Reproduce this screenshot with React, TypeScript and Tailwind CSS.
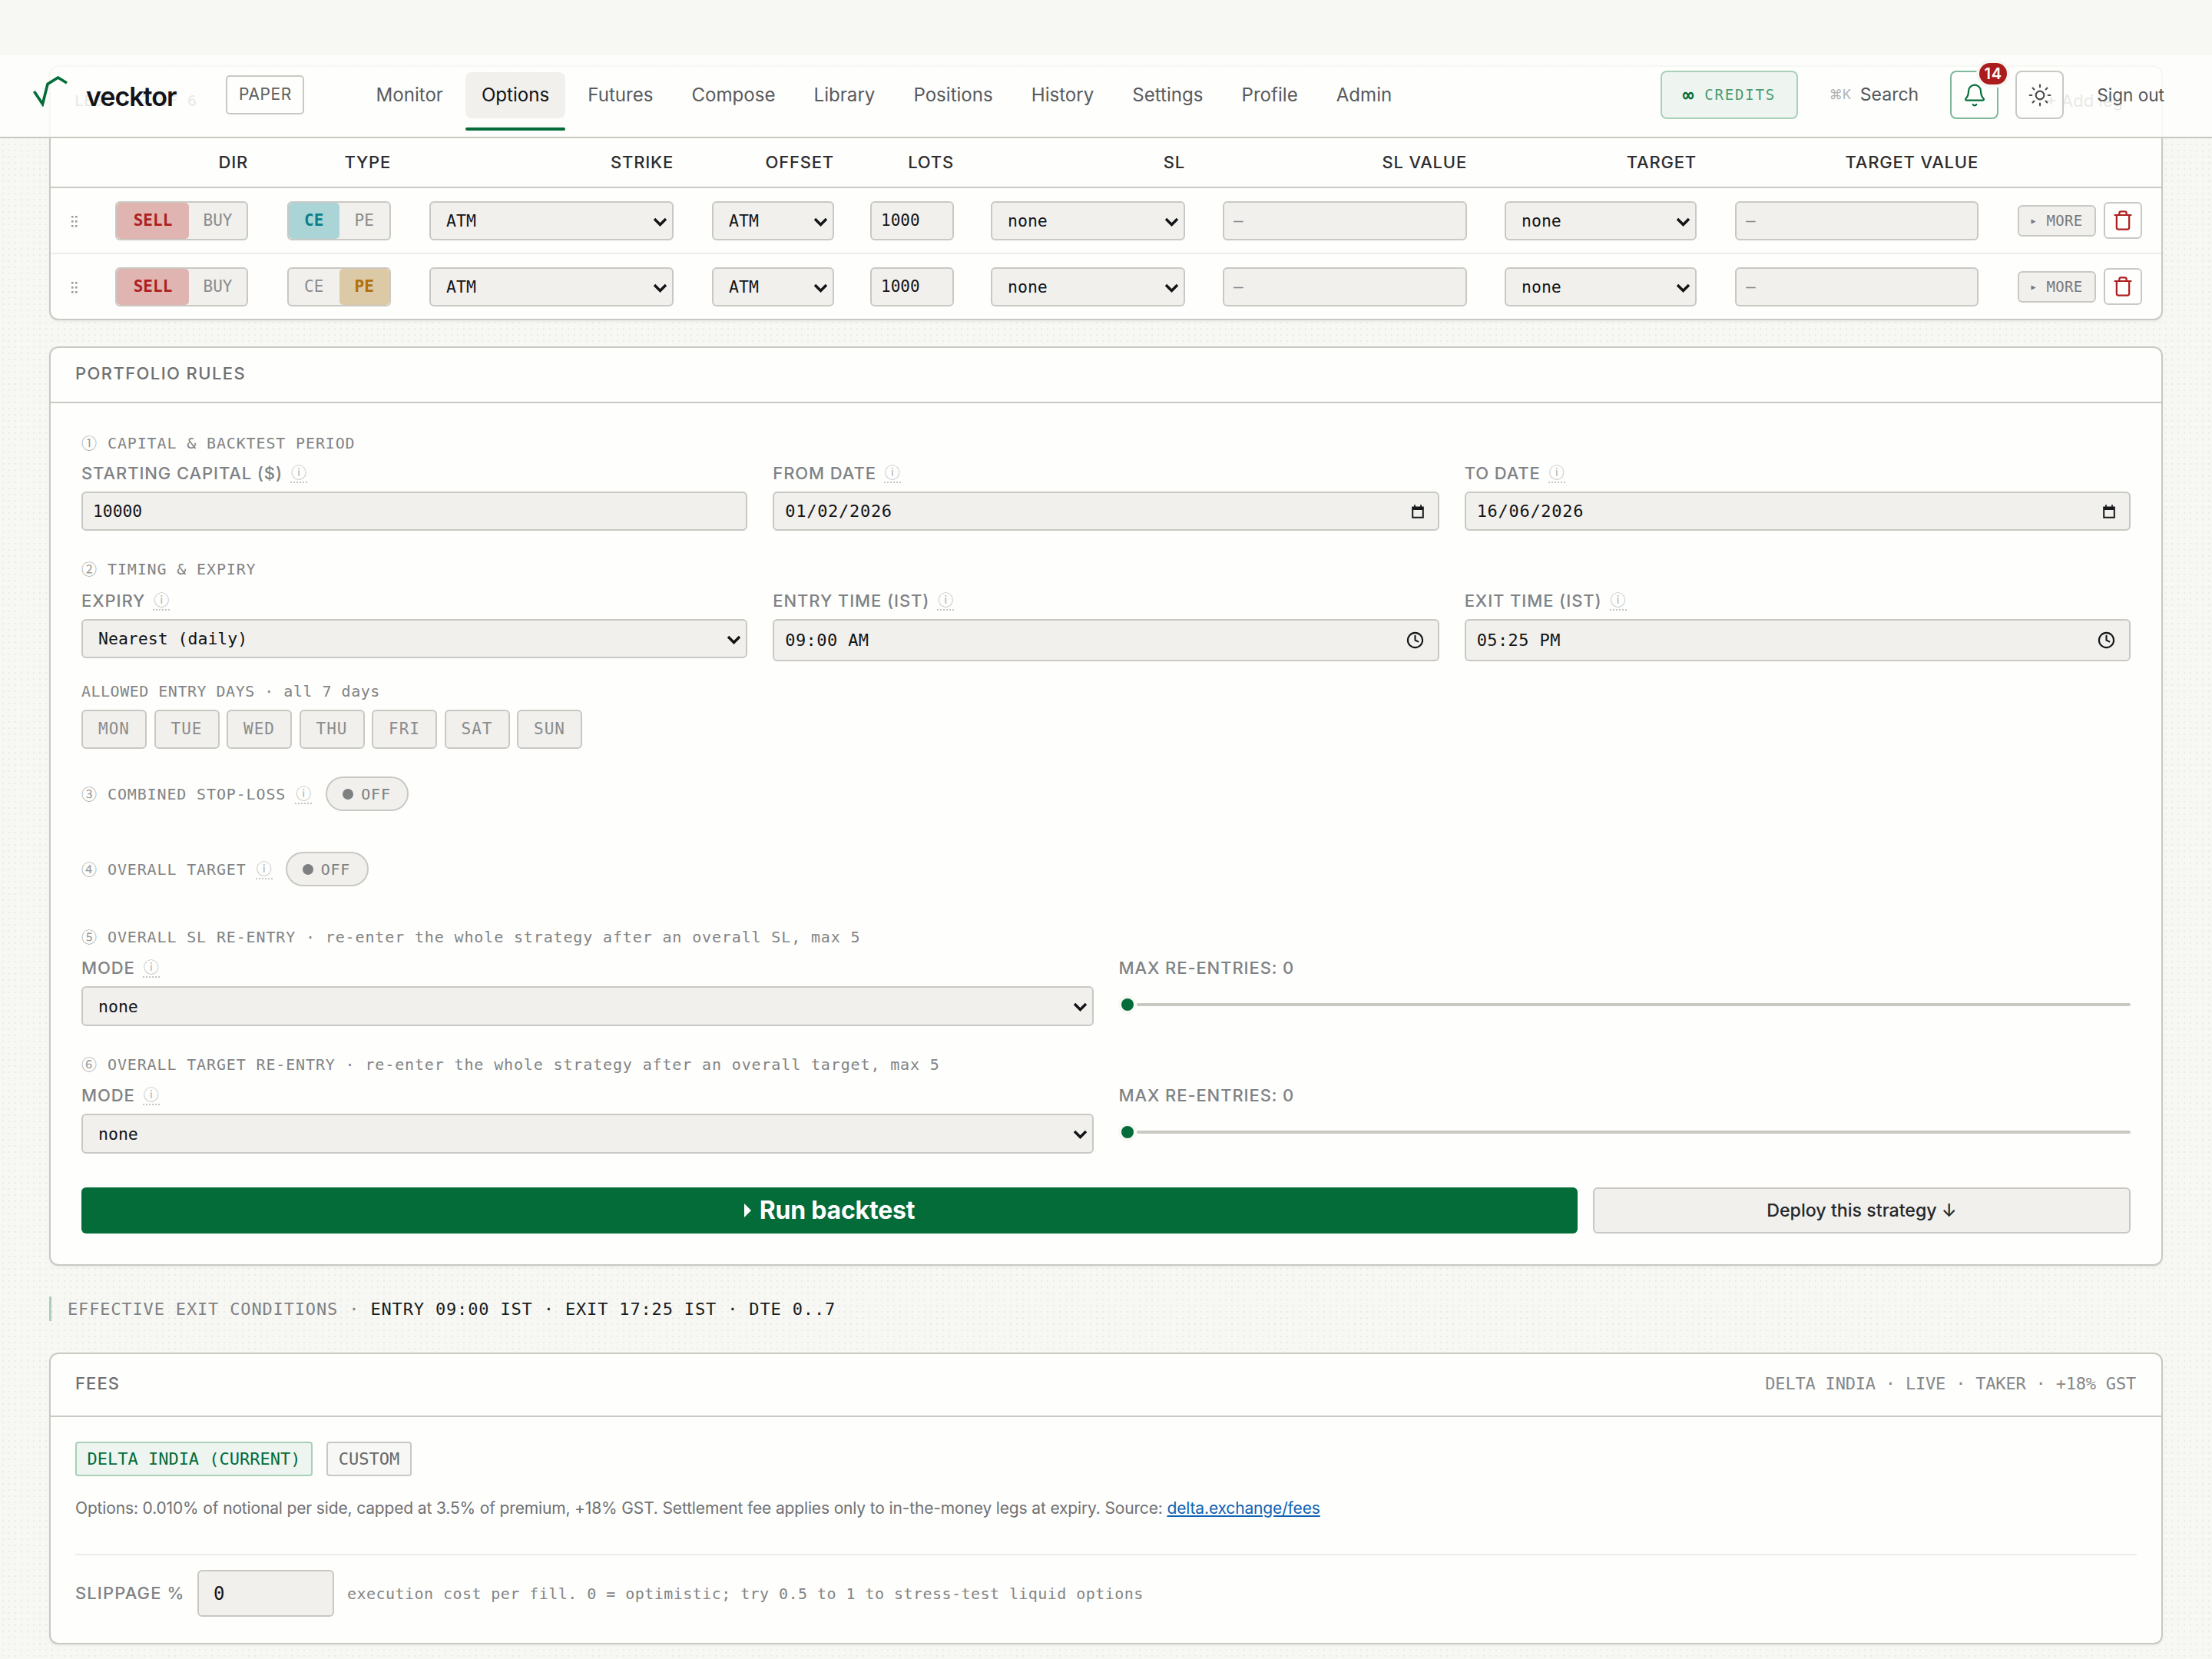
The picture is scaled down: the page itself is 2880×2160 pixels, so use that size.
import React from "react";
import { Bell, Sun, Trash, Clock } from "lucide-react";

const mono = "font-['DejaVu_Sans_Mono',monospace]";
const ctl = "border-2 border-[#c9c8c3] rounded-[6px] bg-[#f1f0ed]";

function Info({ cls = "" }: { cls?: string }) {
  return (
    <span className={"inline-block border-b-2 border-dotted border-[#c4c5c3] text-[#b4b5b3] font-normal leading-[24px] w-[22px] text-center font-['Noto_Sans_CJK_SC',sans-serif] text-[20px] tracking-normal " + cls}>ⓘ</span>
  );
}

function Sel({ value, w, cls = "" }: { value: string; w: string; cls?: string }) {
  return (
    <div className={`relative ${w} ${cls}`}>
      <select defaultValue={value} className={`${ctl} w-full h-full appearance-none ${mono} text-[#131416] text-[21.5px] pl-[20px] pr-[30px] pt-[2px] block`}>
        <option>{value}</option>
      </select>
      <svg width="19" height="12" viewBox="0 0 19 12" fill="none" className="absolute right-[8px] top-[21px] pointer-events-none">
        <path d="M2 2l7.5 7.5L17 2" stroke="#131416" strokeWidth="3.4" />
      </svg>
    </div>
  );
}

function Seg({ a, b, on, w, onCls, split }: { a: string; b: string; on: 0 | 1; w: string; onCls: string; split: string }) {
  const off = "text-[#8a8c8e]";
  return (
    <div className={`${ctl} ${w} h-[51px] grid ${split} overflow-hidden ${mono} text-[21px] text-center leading-[46px]`}>
      <div className={`rounded-[5px] ${on === 0 ? onCls + " font-bold" : off}`}>{a}</div>
      <div className={`rounded-[5px] ${on === 1 ? onCls + " font-bold" : off}`}>{b}</div>
    </div>
  );
}

const cols = "grid grid-cols-[84px_224px_185px_368px_206px_157px_302px_367px_300px_368px_1fr]";

function Handle() {
  return (
    <svg width="8" height="15" viewBox="0 0 8 15" className="ml-[27px] mt-[2px]" fill="#9a9b9a">
      <rect x="0" y="0" width="2.6" height="2.6" />
      <rect x="5" y="0" width="2.6" height="2.6" />
      <rect x="0" y="6" width="2.6" height="2.6" />
      <rect x="5" y="6" width="2.6" height="2.6" />
      <rect x="0" y="12" width="2.6" height="2.6" />
      <rect x="5" y="12" width="2.6" height="2.6" />
    </svg>
  );
}

function LegRow({ type, last }: { type: 0 | 1; last?: boolean }) {
  return (
    <div className={`${cols} items-center ${last ? "h-[84px]" : "h-[86px] border-b-2 border-[#edecea]"}`}>
      <Handle />
      <Seg a="SELL" b="BUY" on={0} w="w-[173px]" split="grid-cols-[94px_1fr]" onCls="bg-[#dfb4b1] text-[#ad1f1f]" />
      <Seg a="CE" b="PE" on={type} w="w-[135px]" split="grid-cols-2" onCls={type === 0 ? "bg-[#abd4d6] text-[#0a7f8c]" : "bg-[#dcc9a5] text-[#b0700a]"} />
      <Sel value="ATM" w="w-[318px] h-[51px]" />
      <Sel value="ATM" w="w-[159px] h-[51px]" />
      <input readOnly value="1000" className={`${ctl} w-[109px] h-[51px] px-[12px] text-[21px] text-[#131416] ${mono}`} />
      <Sel value="none" w="w-[253px] h-[51px]" />
      <input readOnly value="—" className={`${ctl} w-[318px] h-[51px] px-[12px] text-[21px] text-[#85878a] ${mono}`} />
      <Sel value="none" w="w-[250px] h-[51px]" />
      <input readOnly value="—" className={`${ctl} w-[317px] h-[51px] px-[12px] text-[21px] text-[#85878a] ${mono}`} />
      <div className="flex items-center gap-[10px]">
        <button className={`${ctl} w-[102px] h-[41px] flex items-center justify-center gap-[14px] text-[#77797b] text-[19px] ${mono}`}>
          <span className="text-[10px]">▶</span>
          <span className="tracking-[0.3px]">MORE</span>
        </button>
        <button className="border-2 border-[#c9c8c3] rounded-[6px] bg-[#fefefc] w-[50px] h-[48px] flex items-center justify-center">
          <Trash size={28} strokeWidth={1.9} color="#ad1f1f" />
        </button>
      </div>
    </div>
  );
}

function Sec({ n, children, cls = "" }: { n: string; children: React.ReactNode; cls?: string }) {
  return (
    <div className={`flex items-center h-[24px] text-[20px] leading-[24px] tracking-[0.86px] text-[#828486] whitespace-pre ${mono} ${cls}`}>
      <span className="w-[34px] font-['Noto_Sans_CJK_SC',sans-serif] text-[#9a9c9c] tracking-normal">{n}</span>
      {children}
    </div>
  );
}

function FieldLabel({ children, info = true }: { children: React.ReactNode; info?: boolean }) {
  return (
    <div className="flex items-center gap-[10px] h-[28px] text-[22px] font-medium tracking-[0.9px] text-[#7f8285] whitespace-pre">
      <span>{children}</span>
      {info && <Info />}
    </div>
  );
}

function Calendar() {
  return (
    <svg width="16" height="18" viewBox="0 0 16 18" fill="none">
      <path d="M1.2 3.5h13.6v13.3H1.2z" stroke="#16181a" strokeWidth="2" />
      <path d="M1 5.5h14" stroke="#16181a" strokeWidth="3" />
      <path d="M4 0.2v3M12 0.2v3" stroke="#16181a" strokeWidth="1.8" />
    </svg>
  );
}

function DateBox({ value, h, icon, track }: { value: string; h: string; icon: React.ReactNode; track: string }) {
  return (
    <div className={`${ctl} ${h} flex items-center justify-between pl-[14px] pr-[18px]`}>
      <input readOnly value={value} className={`bg-transparent w-[300px] text-[22px] ${track} text-[#131416] outline-none ${mono}`} />
      {icon}
    </div>
  );
}

function Toggle() {
  return (
    <div className={`h-[45px] w-[108px] rounded-full border-2 border-[#c9c8c3] bg-[#f1f0ed] flex items-center pl-[20px] gap-[10px] text-[20px] tracking-[0.8px] text-[#7d7f81] ${mono}`}>
      <span className="w-[14px] h-[14px] rounded-full bg-[#7d7f81]" />
      OFF
    </div>
  );
}

function Slider() {
  return (
    <div className="flex items-center h-[52px] -mt-[2px] pl-[3px]">
      <span className="w-[16px] h-[16px] rounded-full bg-[#046c38] ring-[4px] ring-[#f7f8f4]" />
      <span className="flex-1 h-[4px] bg-[#c9c8c3] ml-[4px] rounded-full" />
    </div>
  );
}

export default function App() {
  const tabs = ["Monitor", "Options", "Futures", "Compose", "Library", "Positions", "History", "Settings", "Profile", "Admin"];
  const days = ["MON", "TUE", "WED", "THU", "FRI", "SAT", "SUN"];
  return (
    <div className="relative w-[2880px] h-[2160px] overflow-hidden font-['Inter',sans-serif] bg-[#f7f8f4] bg-[radial-gradient(circle,#eaebe6_1.3px,transparent_1.5px)] bg-[length:8px_8px]">
      <div className="h-[72px] bg-[#f7f8f4]" />

      {/* nav */}
      <nav className="absolute top-[72px] left-0 right-0 z-10 h-[108px] bg-[#fefefc]/85 border-b-2 border-[#c9c8c3] flex items-center pl-[43px] pr-[62px]">
        <svg width="46" height="40" viewBox="0 0 46 40" fill="none" className="-mt-[12px]">
          <polyline points="1.5,20 12.5,36.5 19,10.5 32.5,2 44,9" stroke="#046c38" strokeWidth="3.6" />
        </svg>
        <span className="ml-[23px] text-[34px] font-semibold tracking-[-1px] text-[#12141a] leading-none mt-[2px]">vecktor</span>
        <span className="ml-[65px] w-[102px] h-[51px] border-2 border-[#c9c8c3] rounded-[5px] bg-[#fefefc] flex items-center justify-center text-[21px] text-[#5c5e60] -mt-[4px] tracking-[0.6px]">PAPER</span>
        <div className="ml-[72px] -mt-[2px] flex items-center gap-[8px]">
          {tabs.map((t) => (
            <div key={t} className={`relative h-[60px] px-[21px] flex items-center rounded-[8px] text-[24.1px] ${t === "Options" ? "bg-[#f1f0ed] text-[#131416]" : "text-[#595b5e]"}`}>
              {t}
              {t === "Options" && <span className="absolute left-0 right-0 -bottom-[16px] h-[4px] bg-[#046c38] rounded-[2px]" />}
            </div>
          ))}
        </div>
        <div className="ml-auto -mt-[3px] flex items-center">
          <div className={`w-[179px] h-[63px] rounded-[8px] border-2 border-[#a8d0b8] bg-[#eef5f1] flex items-center justify-center gap-[14px] text-[#4a9a70] text-[19px] tracking-[1.8px] ${mono}`}>
            <span className="text-[#046c38] font-bold tracking-normal text-[24px]">∞</span>
            CREDITS
          </div>
          <span className="ml-[41px] text-[17px] text-[#b0b2b3] w-[40px]">⌘K</span>
          <span className="text-[23px] text-[#55575a]">Search</span>
          <div className="relative ml-[41px] w-[63px] h-[63px] rounded-[8px] border-2 border-[#7fb89a] bg-[#fefefc] flex items-center justify-center">
            <Bell size={32} strokeWidth={1.6} color="#046c38" />
            <span className="absolute -top-[12px] left-[36px] w-[36px] h-[28px] rounded-full bg-[#ab1c1c] ring-[4px] ring-[#f6f6f3] text-white text-[20px] font-semibold text-center leading-[28px] tracking-[0.8px]">14</span>
          </div>
          <div className="ml-[22px] w-[63px] h-[63px] rounded-[8px] border-2 border-[#c9c8c3] flex items-center justify-center">
            <Sun size={32} strokeWidth={1.6} color="#4a4c4e" />
          </div>
          <span className="ml-[43px] text-[22.6px] text-[#55575a]">Sign out</span>
        </div>
      </nav>

      <main className="px-[64px] pt-[13px]">
        {/* legs */}
        <section className="border-2 border-[#c9c8c3] rounded-[12px] bg-[#fefefc] shadow-[0_2px_3px_rgba(0,0,0,0.05)]">
          <div className="h-[93px] flex items-start justify-between pl-[31px] pr-[50px] pt-[30px] leading-[28px]">
            <span className={`text-[20px] tracking-[0.2px] text-[#6a6c6e] ${mono}`}>LEGS · 2 OF 6</span>
            <span className="text-[22px] text-[#6a6c6e]">+ Add leg</span>
          </div>
          <div className={`${cols} items-center h-[65px] border-b-2 border-[#c9c8c3] text-[22px] font-medium tracking-[0.8px] text-[#2d2e30] text-right`}>
            <div />
            <div className="w-[173px]">DIR</div>
            <div className="w-[135px]">TYPE</div>
            <div className="w-[318px]">STRIKE</div>
            <div className="w-[159px]">OFFSET</div>
            <div className="w-[109px]">LOTS</div>
            <div className="w-[253px]">SL</div>
            <div className="w-[318px]">SL VALUE</div>
            <div className="w-[250px]">TARGET</div>
            <div className="w-[317px]">TARGET VALUE</div>
            <div />
          </div>
          <LegRow type={0} />
          <LegRow type={1} last />
        </section>

        {/* portfolio rules */}
        <section className="mt-[34px] border-2 border-[#c9c8c3] rounded-[12px] bg-[#fefefc] shadow-[0_2px_3px_rgba(0,0,0,0.05)]">
          <div className="h-[72px] border-b-2 border-[#c9c8c3] flex items-center pl-[32px] pb-[3px] text-[22px] font-medium tracking-[1.4px] text-[#6e7073]">PORTFOLIO RULES</div>
          <div className="px-[40px] pt-[40px] pb-[40px]">
            <Sec n="①">CAPITAL &amp; BACKTEST PERIOD</Sec>
            <div className="mt-[13px] grid grid-cols-3 gap-x-[33px]">
              <div>
                <FieldLabel>STARTING CAPITAL ($)</FieldLabel>
                <input readOnly value="10000" className={`${ctl} mt-[10px] w-full h-[51px] px-[13px] text-[21.3px] text-[#131416] ${mono}`} />
              </div>
              <div>
                <FieldLabel>FROM DATE</FieldLabel>
                <div className="mt-[10px]"><DateBox value="01/02/2026" h="h-[51px]" track="tracking-[0.7px]" icon={<Calendar />} /></div>
              </div>
              <div>
                <FieldLabel>TO DATE</FieldLabel>
                <div className="mt-[10px]"><DateBox value="16/06/2026" h="h-[51px]" track="tracking-[0.7px]" icon={<Calendar />} /></div>
              </div>
            </div>

            <Sec n="②" cls="mt-[38px]">TIMING &amp; EXPIRY</Sec>
            <div className="mt-[15px] grid grid-cols-3 gap-x-[33px] items-start">
              <div>
                <FieldLabel>EXPIRY</FieldLabel>
                <Sel value="Nearest (daily)" w="w-full h-[51px]" cls="mt-[10px]" />
              </div>
              <div>
                <FieldLabel>ENTRY TIME (IST)</FieldLabel>
                <div className="mt-[10px]"><DateBox value="09:00 AM" h="h-[55px]" track="tracking-[0.4px]" icon={<Clock size={23} strokeWidth={2.2} color="#16181a" />} /></div>
              </div>
              <div>
                <FieldLabel>EXIT TIME (IST)</FieldLabel>
                <div className="mt-[10px]"><DateBox value="05:25 PM" h="h-[55px]" track="tracking-[0.4px]" icon={<Clock size={23} strokeWidth={2.2} color="#16181a" />} /></div>
              </div>
            </div>

            <div className={`mt-[27px] h-[24px] text-[20px] leading-[24px] tracking-[0.5px] text-[#828486] ${mono}`}>ALLOWED ENTRY DAYS · all 7 days</div>
            <div className="mt-[12px] flex gap-[9.5px]">
              {days.map((d) => (
                <div key={d} className={`${ctl} w-[85px] h-[51px] flex items-center justify-center text-[21px] tracking-[1px] text-[#8a8c8e] ${mono}`}>{d}</div>
              ))}
            </div>

            <div className="mt-[36px] flex items-center h-[45px]">
              <Sec n="③">COMBINED STOP-LOSS<span className="w-[12px]" /></Sec>
              <Info />
              <span className="w-[18px]" />
              <Toggle />
            </div>
            <div className="mt-[53px] flex items-center h-[45px]">
              <Sec n="④">OVERALL TARGET<span className="w-[12px]" /></Sec>
              <Info />
              <span className="w-[17px]" />
              <Toggle />
            </div>

            <Sec n="⑤" cls="mt-[54px]">OVERALL SL RE-ENTRY · re-enter the whole strategy after an overall SL, max 5</Sec>
            <div className="mt-[14px] grid grid-cols-2 gap-x-[33px]">
              <div>
                <FieldLabel>MODE</FieldLabel>
                <Sel value="none" w="w-full h-[52px]" cls="mt-[10px]" />
              </div>
              <div>
                <FieldLabel info={false}>MAX RE-ENTRIES: 0</FieldLabel>
                <div className="mt-[10px]"><Slider /></div>
              </div>
            </div>

            <Sec n="⑥" cls="mt-[38px]">OVERALL TARGET RE-ENTRY · re-enter the whole strategy after an overall target, max 5</Sec>
            <div className="mt-[14px] grid grid-cols-2 gap-x-[33px]">
              <div>
                <FieldLabel>MODE</FieldLabel>
                <Sel value="none" w="w-full h-[52px]" cls="mt-[10px]" />
              </div>
              <div>
                <FieldLabel info={false}>MAX RE-ENTRIES: 0</FieldLabel>
                <div className="mt-[10px]"><Slider /></div>
              </div>
            </div>

            <div className="mt-[44px] flex gap-[20px]">
              <button className="flex-1 h-[60px] rounded-[6px] bg-[#046c38] text-white text-[32px] tracking-[-0.2px] font-bold flex items-center justify-center gap-[11px]">
                <svg width="9" height="18" viewBox="0 0 9 18" fill="#fff"><path d="M0 0l9 9-9 9z" /></svg>
                Run backtest
              </button>
              <button className={`${ctl} w-[700px] h-[60px] text-[23.2px] font-medium text-[#26282a]`}>Deploy this strategy ↓</button>
            </div>
          </div>
        </section>

        {/* effective exit */}
        <div className={`mt-[40px] h-[32px] border-l-[3px] border-[#a8d0b8] pl-[21px] flex items-center text-[22px] tracking-[0.84px] whitespace-pre ${mono}`}>
          <span className="text-[#7f8285]">EFFECTIVE EXIT CONDITIONS · </span>
          <span className="text-[#1a1c1e]">ENTRY 09:00 IST · EXIT 17:25 IST · DTE 0..7</span>
        </div>

        {/* fees */}
        <section className="mt-[41px] border-2 border-[#c9c8c3] rounded-[12px] bg-[#fefefc] shadow-[0_2px_3px_rgba(0,0,0,0.05)]">
          <div className="h-[82px] border-b-2 border-[#c9c8c3] flex items-center justify-between pl-[32px] pr-[33px] pb-[3px]">
            <span className="text-[22px] font-medium tracking-[1.1px] text-[#6e7073]">FEES</span>
            <span className={`text-[22px] tracking-[-0.2px] text-[#85878a] ${mono}`}>DELTA INDIA · LIVE · TAKER · +18% GST</span>
          </div>
          <div className="px-[32px] pt-[32px] pb-[34px]">
            <div className="flex gap-[18px]">
              <div className={`w-[309px] h-[45px] rounded-[4px] border-2 border-[#a8d0b8] bg-[#eef5f1] flex items-center justify-center text-[22px] text-[#046c38] ${mono}`}>DELTA INDIA (CURRENT)</div>
              <div className={`w-[111px] h-[45px] rounded-[4px] border-2 border-[#c9c8c3] bg-[#f7f8f6] flex items-center justify-center text-[22px] text-[#66686a] ${mono}`}>CUSTOM</div>
            </div>
            <p className="mt-[28px] h-[28px] text-[21px] tracking-[-0.15px] leading-[28px] text-[#6f7174]">
              Options: 0.010% of notional per side, capped at 3.5% of premium, +18% GST. Settlement fee applies only to in-the-money legs at expiry. Source: <span className="text-[#0f62b5] underline">delta.exchange/fees</span>
            </p>
            <div className="mt-[45px] border-t-2 border-[#edecea]" />
            <div className="mt-[19px] flex items-center">
              <span className="w-[159px] text-[22px] font-medium tracking-[1.1px] text-[#7f8285]">SLIPPAGE %</span>
              <input readOnly value="0" className={`${ctl} w-[178px] h-[61px] px-[19px] text-[24px] text-[#131416] ${mono}`} />
              <span className={`ml-[17px] text-[20px] tracking-[0.45px] text-[#828486] ${mono}`}>execution cost per fill. 0 = optimistic; try 0.5 to 1 to stress-test liquid options</span>
            </div>
          </div>
        </section>
      </main>
    </div>
  );
}
